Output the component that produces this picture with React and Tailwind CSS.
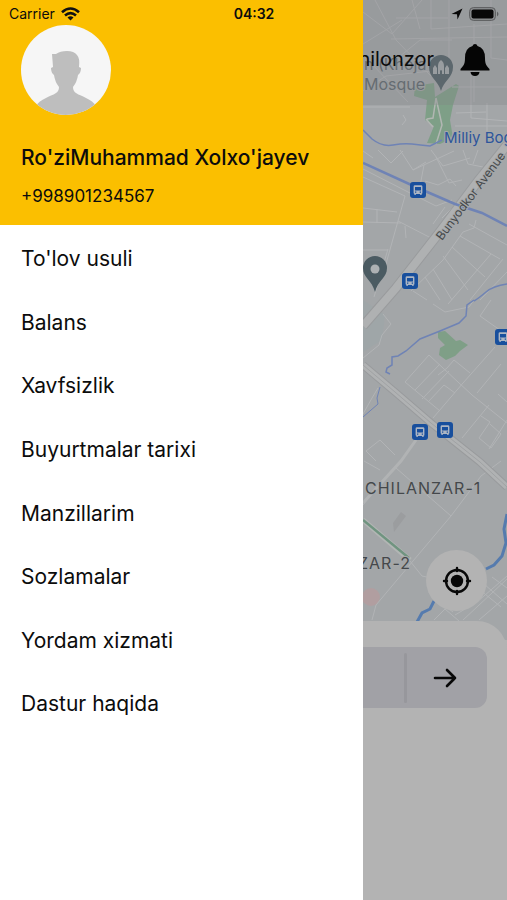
import React from "react";

const menu = [
  "To'lov usuli",
  "Balans",
  "Xavfsizlik",
  "Buyurtmalar tarixi",
  "Manzillarim",
  "Sozlamalar",
  "Yordam xizmati",
  "Dastur haqida",
];

const minorRoads = [
  "M363 12L392 34L422 0M363 44L402 20M375 0L396 40L431 76M371 63L408 102M363 91L386 76L440 70M391 39L507 37M431 0V29L507 24M449 0V63M474 24V102M491 0V58L507 60M396 18H448M412 0L420 29M399 57L420 40H452M452 87H507M471 70V118L507 121M363 107H410M403 115L406 120L402 125M456 113L486 112M455 126H507M487 103V140",
  "M378 150L391 163L403 151M363 151L373 158M400 150L413 170L454 151M413 170L426 162M424 165L420 186M431 150L443 166L470 158M436 157L449 183L462 180M425 181L438 185L450 179L456 186M463 150L468 164L483 167M478 150L473 164M363 169L410 193L436 206L452 200M363 177L405 196L398 221L384 271M363 208L397 212M363 222L401 223M377 209V223M398 221L431 238M405 226L406 238M363 250H388M363 267L385 269M388 249L374 297M433 224L445 207M442 218L460 200",
  "M476 220L474 228L463 232L443 260L411 291M460 236L500 259M469 224L507 245M452 247L485 277M443 256L468 290M433 269L452 300M425 277L440 300M491 254L448 304M503 259L470 300M507 272L480 300M413 291L427 300M363 358L379 345L382 335L391 324L383 314M433 304L445 312L469 307L474 300M491 300L480 316L507 335",
  "M495 347L463 383L433 418M429 355L405 382L440 411M429 355L472 395L507 423M440 364L415 390M449 371L422 399M428 402L444 385L455 393M438 375L447 368L454 360L470 373M501 364L477 393M489 405L462 438M481 416L490 422L479 438L491 448L501 434L490 424M498 394L507 402M507 420L489 449M363 414L372 398L378 388M366 451L380 440L395 455M366 451L376 461",
  "M396 468L451 516M363 505L375 490M501 461L481 476L451 516L413 561L376 605L372 620M410 561L422 576L431 578",
  "M434 620L445 609L459 621M480 590L501 607M492 577L507 588M455 615L477 602L507 576M463 620L507 579M479 620L507 596M440 602L453 612M484 584L507 604M364 461L380 470",
];

const buses = [
  [418, 190],
  [410, 281],
  [503, 337],
  [420, 432],
  [445, 430],
];

function Bus({ x, y }) {
  return (
    <g transform={`translate(${x - 8} ${y - 8})`}>
      <rect width="16" height="16" rx="3" fill="#184f9d" />
      <path
        fillRule="evenodd"
        d="M5 3.2H11Q12.4 3.2 12.4 4.6V11.2L11.6 12V13H10.2V12H5.8V13H4.4V12L3.6 11.2V4.6Q3.6 3.2 5 3.2ZM5 5V8.4H11V5ZM5 9.6V10.7H6.3V9.6ZM9.7 9.6V10.7H11V9.6Z"
        fill="#adb6c3"
      />
    </g>
  );
}

function CityMap() {
  return (
    <svg
      className="absolute inset-0 h-[640px] w-full"
      viewBox="363 0 144 640"
      preserveAspectRatio="xMinYMin slice"
      role="img"
      aria-label="Map"
      fontFamily="Inter, 'Liberation Sans', sans-serif"
    >
      <rect x="363" width="1200" height="640" fill="#a3a6a8" />
      <path d="M363 300L385 315L382 340L363 352Z" fill="#9fa6a8" />
      <path d="M393 523L401 512L406 516L394 532Z" fill="#9b9d9f" />
      <circle cx="371" cy="597" r="9" fill="#b69b9d" opacity=".7" />

      <path d="M415 86L434 83L435 97L456 84L459 86L453 105L450 120L453 138L440 144L427 143L434 126L425 120L427 100L414 96Z" fill="#7e9f87" />
      <path d="M438 332L445 331L456 341L460 340L468 345L460 351L455 356L446 360L439 355L440 348L445 345L438 338Z" fill="#7f9f87" />

      {minorRoads.map((d) => (
        <path key={d} d={d} fill="none" stroke="#b2b4b6" strokeWidth="1" />
      ))}
      <path d="M436 98L433 118L427 119M436 98L442 125L436 144M426 119L433 127" fill="none" stroke="#b2b7b3" strokeWidth="1.5" />

      <path d="M507 145L478 181L439 233L396 288L363 326" fill="none" stroke="#999b9d" strokeWidth="10" />
      <path d="M507 145L478 181L439 233L396 288L363 326" fill="none" stroke="#afb1b2" strokeWidth="8" />
      <path d="M363 365L395 392L431 423L480 462L507 487" fill="none" stroke="#999b9d" strokeWidth="8" />
      <path d="M363 365L395 392L431 423L480 462L507 487" fill="none" stroke="#b0b2b3" strokeWidth="6" />
      <path d="M363 365L395 392L431 423L480 462L507 487" fill="none" stroke="#a0a2a4" strokeWidth="1" />
      <path d="M416 440L401 461L363 503" fill="none" stroke="#b1b3b4" strokeWidth="3" />
      <path d="M363 520L410 560" fill="none" stroke="#b2b6b4" strokeWidth="5" />
      <path d="M363 520L409 558" fill="none" stroke="#709480" strokeWidth="2.5" />

      <g fill="none" stroke="#6f83b5">
        <path d="M363 130L372 139Q382 147 393 145T412 144T430 146L442 140" strokeWidth="1.5" />
        <path d="M363 163L418 188L455 204L482 213L507 226" strokeWidth="2.5" />
        <path d="M507 284Q493 286 486 292T474 301" strokeWidth="1.5" />
        <path d="M474 300L467 305L466 316L459 323L440 331L420 339L406 351L398 356L392 357L392 365L387 368L386 372L390 374" strokeWidth="1.5" />
        <path d="M380 387L377 398L378 404L363 417" strokeWidth="1" />
      </g>
      <path d="M507 514L504 529L506 543L502 556L494 565L486 569M434 601L430 609L422 613L417 622" fill="none" stroke="#557bae" strokeWidth="3" />

      {buses.map(([x, y]) => (
        <Bus key={`${x}-${y}`} x={x} y={y} />
      ))}

      <path d="M375 292C372 280 363 278 363 268A12 12 0 0 1 387 268C387 278 378 280 375 292Z" fill="#4b5b62" />
      <circle cx="375" cy="269" r="4.5" fill="#adb1b3" />
      <path d="M441 91C438 80 429 78 429 67A12 12 0 0 1 453 67C453 78 444 80 441 91Z" fill="#4c5c63" />
      <path d="M433 74V68L435 65L437 68V74ZM438 74V66Q438 62 441 60Q444 62 444 66V74H442V71Q441 69 440 71V74ZM445 74V68L447 65L449 68V74Z" fill="#a4a9ac" />

      <g stroke="#a5a8aa" strokeWidth="2" paintOrder="stroke" strokeLinejoin="round">
        <text x="364" y="70" fontSize="16" fill="#5a646a">n (Khoja</text>
        <text x="364" y="90" fontSize="16" fill="#5a646a">Mosque</text>
        <text x="444" y="143" fontSize="15" fill="#2d559b">Milliy Bog</text>
        <text transform="translate(442 241) rotate(-53)" fontSize="12" fill="#45484b">Bunyodkor Avenue</text>
        <text x="365" y="494" fontSize="16" letterSpacing="1" fill="#45484b">CHILANZAR-1</text>
        <text x="358" y="569" fontSize="16" letterSpacing="1" fill="#45484b">ZAR-2</text>
      </g>
    </svg>
  );
}

function StatusBar() {
  return (
    <div className="absolute inset-x-0 top-0 z-20 grid h-7 grid-cols-3 items-center pr-2 pl-[9px] text-sm">
      <div className="flex items-center gap-1.5">
        <span>Carrier</span>
        <svg className="h-[14px] w-[19px]" viewBox="0 0 19 14" fill="none" stroke="#111" strokeWidth="2.6" aria-hidden="true">
          <path d="M1 5.2Q9.5 -2.2 18 5.2M4 8.6Q9.5 3.8 15 8.6" />
          <path d="M6.5 10.5Q9.5 8.2 12.5 10.5L9.5 13.5Z" fill="#111" stroke="none" />
        </svg>
      </div>
      <span className="text-center font-semibold">04:32</span>
      <div className="flex items-center justify-end gap-1.5">
        <svg className="h-3 w-3" viewBox="0 0 12 12" aria-hidden="true">
          <path d="M.5 6L11.5 .5L6.5 11.5L6 6.2Z" fill="#080808" />
        </svg>
        <svg className="h-[14px] w-[30px]" viewBox="0 0 30 14" aria-hidden="true">
          <rect x=".6" y=".6" width="25.8" height="12.8" rx="3.8" fill="#8b8d8f" stroke="#5c5d5f" />
          <rect x="2.5" y="2.5" width="22" height="9" rx="2" fill="#080808" />
          <path d="M28 4.5Q31 7 28 9.5Z" fill="#5c5d5f" />
        </svg>
      </div>
    </div>
  );
}

function Avatar() {
  return (
    <svg className="h-[90px] w-[90px] rounded-full" viewBox="0 0 90 90" role="img" aria-label="Profile photo">
      <rect width="90" height="90" fill="#f6f6f6" />
      <path
        d="M14 82C20 73 29 72 35 68Q38 66 38 62Q34 57 33 50Q30 48 30 43L32 42L31 29L35 29Q39 26 46 26Q53 26 56 30Q59 33 58 42L60 43Q60 48 57 50Q56 57 52 62Q52 66 55 68C61 72 70 73 76 82V90H14Z"
        fill="#bebebe"
      />
    </svg>
  );
}

function Drawer() {
  return (
    <aside className="relative z-10 w-[363px] max-w-[80%] shrink-0 bg-white">
      <header className="h-[225px] bg-[#fbbf00] px-[21px] pt-[25px]">
        <Avatar />
        <h1 className="mt-[29px] text-[21px] leading-7 font-medium whitespace-nowrap">Ro'ziMuhammad Xolxo'jayev</h1>
        <p className="mt-3 text-[17px] leading-6">+998901234567</p>
      </header>
      <nav className="pt-0.5">
        <ul className="grid h-[509px] grid-rows-8">
          {menu.map((item) => (
            <li key={item} className="flex">
              <a href="#" className="flex flex-1 items-center px-[21px] text-[21px]">
                {item}
              </a>
            </li>
          ))}
        </ul>
      </nav>
    </aside>
  );
}

export default function App() {
  return (
    <div className="relative flex min-h-screen overflow-hidden bg-[#b3b3b3] font-['Inter','Liberation_Sans',sans-serif] text-[#0c0c0c]">
      <StatusBar />
      <Drawer />
      <main className="relative flex min-w-0 flex-1 flex-col">
        <CityMap />
        <div className="relative flex h-[105px] items-start justify-end gap-[26px] bg-[#808285]/30 pt-[43px] pr-[17px]">
          <span className="pt-1 text-xl leading-6">Chilonzor</span>
          <button aria-label="Notifications" className="shrink-0">
            <svg className="h-[34px] w-[30px]" viewBox="0 0 30 34" fill="#050505">
              <path d="M15 1Q17 1 17.5 3Q25 5 25 15C25 22 27 23 29.5 26V27.5H.5V26C3 23 5 22 5 15Q5 5 12.5 3Q13 1 15 1ZM10.5 29H19.5Q19 33 15 33Q11 33 10.5 29Z" />
            </svg>
          </button>
        </div>
        <div className="relative mt-[445px] flex justify-end pr-5">
          <button aria-label="My location" className="flex h-[61px] w-[61px] items-center justify-center rounded-full bg-[#b3b3b3]">
            <svg className="h-[30px] w-[30px]" viewBox="0 0 30 30" fill="none" stroke="#080808" strokeWidth="2.4" strokeLinecap="round">
              <circle cx="15" cy="15" r="11" />
              <circle cx="15" cy="15" r="6.2" fill="#080808" stroke="none" />
              <path d="M15 2V5M15 25V28M2 15H5M25 15H28" />
            </svg>
          </button>
        </div>
        <section className="relative mt-[10px] flex-1 rounded-tr-[30px] bg-[#b3b3b3] pt-[26px] pr-5">
          <div className="flex h-[61px] items-center justify-end rounded-r-xl bg-[#a1a1a6]">
            <span className="h-[50px] w-[3px] rounded-full bg-[#97979c]" />
            <button aria-label="Continue" className="flex h-full w-20 items-center justify-center pr-1">
              <svg className="h-6 w-6" viewBox="0 0 24 24" fill="none" stroke="#080808" strokeWidth="2.6" strokeLinecap="round" strokeLinejoin="round">
                <path d="M2 12H22M14 4L22 12L14 20" />
              </svg>
            </button>
          </div>
        </section>
      </main>
    </div>
  );
}
